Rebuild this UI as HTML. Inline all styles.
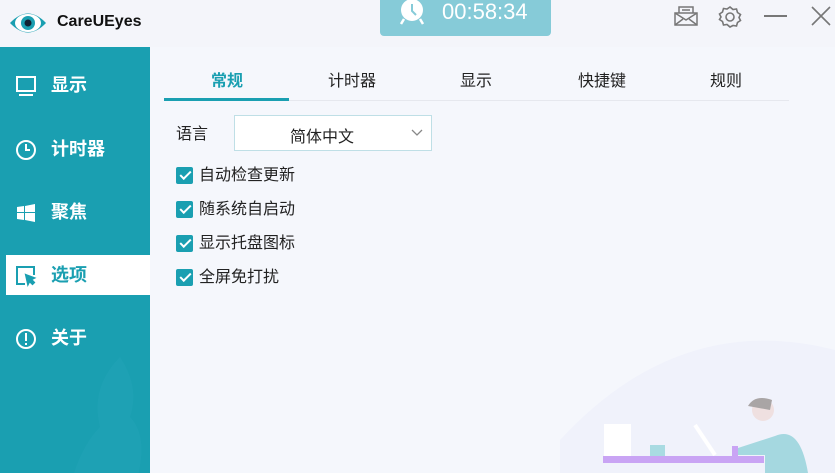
<!DOCTYPE html>
<html><head><meta charset="utf-8"><style>
*{margin:0;padding:0;box-sizing:border-box}
body{width:835px;height:473px;overflow:hidden;background:#f5f7fc;font-family:"Liberation Sans","Noto Sans CJK SC",sans-serif;position:relative}
.top{position:absolute;left:0;top:0;width:835px;height:47px;background:#f4f5fa}
.side{position:absolute;left:0;top:47px;width:150px;height:426px;background:#1a9fb1;overflow:hidden}
.item{position:absolute;left:6px;width:144px;height:40px;color:#fff;font-size:18px;font-weight:bold;line-height:40px;padding-left:45px}
.item svg{position:absolute;left:9px;top:10px}
.act{background:#fff;color:#1a9fb1}
.tab{position:absolute;top:67px;font-size:16px;color:#222}
.cb{position:absolute;left:176px;font-size:16px;color:#222;padding-left:23px;line-height:18px}
.cb:before{content:"";position:absolute;left:0;top:0;width:17px;height:17px;background:#1a9fb1;border-radius:2px}
.cb:after{content:"";position:absolute;left:4px;top:4px;width:9px;height:4px;border-left:2px solid #fff;border-bottom:2px solid #fff;transform:rotate(-45deg)}
</style></head><body>
<div class="top"></div>
<svg style="position:absolute;left:8px;top:8px" width="40" height="30" viewBox="0 0 40 30"><path d="M2 15 Q20 -4 38 15 Q20 34 2 15Z" fill="#1a9fb1"/><ellipse cx="20" cy="15" rx="13" ry="9" fill="#fff"/><circle cx="20" cy="15" r="7" fill="#1a9fb1"/><circle cx="20" cy="15" r="3.5" fill="#123"/></svg>
<div style="position:absolute;left:57px;top:13px;font-size:16px;font-weight:bold;color:#111">CareUEyes</div>
<div style="position:absolute;left:380px;top:0;width:171px;height:36px;background:#86cbd8;border-radius:0 0 4px 4px"></div>
<svg style="position:absolute;left:397px;top:0" width="30" height="26" viewBox="0 0 30 26"><circle cx="15" cy="10" r="11" fill="#fff"/><path d="M15 4v7l4 4" stroke="#86cbd8" stroke-width="2" fill="none"/><path d="M7 19l-3 5M23 19l3 5" stroke="#fff" stroke-width="2.5"/></svg>
<div style="position:absolute;left:442px;top:0;font-size:22px;color:#fff;line-height:24px">00:58:34</div>
<svg style="position:absolute;left:673px;top:5px" width="26" height="22" viewBox="0 0 26 22" fill="none" stroke="#777" stroke-width="1.5"><rect x="2" y="8" width="22" height="12"/><path d="M2 8l11 7 11-7M2 20l8-6M24 20l-8-6M6 8V2h14v6M9 5h8"/></svg>
<svg style="position:absolute;left:718px;top:5px" width="24" height="24" viewBox="0 0 24 24" fill="none" stroke="#777" stroke-width="1.6"><path d="M12 2l3 2.5 3.5-.5 1 3.5 3 2-1.5 3 1.5 3-3 2-1 3.5-3.5-.5L12 22l-3-2.5-3.5.5-1-3.5-3-2L3 12 1.5 9l3-2 1-3.5L9 4z"/><circle cx="12" cy="12" r="4"/></svg>
<div style="position:absolute;left:764px;top:15px;width:23px;height:1.5px;background:#777"></div>
<svg style="position:absolute;left:811px;top:6px" width="20" height="20" viewBox="0 0 20 20" stroke="#777" stroke-width="1.6"><path d="M1 1l18 18M19 1L1 19"/></svg>
<div class="side">
<svg style="position:absolute;left:-30px;top:280px" width="200" height="160" viewBox="0 0 200 160"><path d="M150 30 Q170 60 160 90 Q180 110 165 160 L100 160 Q110 120 130 100 Q120 60 150 30Z" fill="#22a4b5" opacity=".6"/></svg>
<div class="item" style="top:18px"><svg width="22" height="22" viewBox="0 0 22 22" fill="none" stroke="#fff" stroke-width="2"><rect x="2" y="2" width="18" height="14"/><path d="M4 20h14"/></svg>显示</div>
<div class="item" style="top:82px"><svg width="22" height="22" viewBox="0 0 22 22" fill="none" stroke="#fff" stroke-width="2"><circle cx="11" cy="11" r="9"/><path d="M11 5v6h4"/></svg>计时器</div>
<div class="item" style="top:145px"><svg width="22" height="22" viewBox="0 0 22 22" fill="#fff"><path d="M2 5l7-1v6H2zM10 4l10-2v8H10zM2 11h7v7l-7-1zM10 11h10v9l-10-2z"/></svg>聚焦</div>
<div class="item act" style="top:208px"><svg width="22" height="22" viewBox="0 0 22 22" fill="none" stroke="#1a9fb1" stroke-width="2"><path d="M10 19H2V2h17v8"/><path d="M11 10l8 3-3 1.5 3 3-1.5 1.5-3-3L13 19z" fill="#1a9fb1"/></svg>选项</div>
<div class="item" style="top:271px"><svg width="22" height="22" viewBox="0 0 22 22" fill="none" stroke="#fff" stroke-width="2"><circle cx="11" cy="11" r="9"/><path d="M11 5v8M11 15v2"/></svg>关于</div>
</div>
<div class="tab" style="left:211px;color:#1a9fb1;font-weight:bold">常规</div>
<div class="tab" style="left:328px">计时器</div>
<div class="tab" style="left:460px">显示</div>
<div class="tab" style="left:578px">快捷键</div>
<div class="tab" style="left:710px">规则</div>
<div style="position:absolute;left:164px;top:100px;width:625px;height:1px;background:#e6e8ee"></div>
<div style="position:absolute;left:164px;top:98px;width:125px;height:3px;background:#1a9fb1"></div>
<div style="position:absolute;left:176px;top:120px;font-size:16px;color:#222">语言</div>
<div style="position:absolute;left:234px;top:115px;width:198px;height:36px;background:#fff;border:1px solid #bfdfe6"></div>
<div style="position:absolute;left:290px;top:123px;font-size:16px;color:#222">简体中文</div>
<svg style="position:absolute;left:410px;top:128px" width="14" height="10" viewBox="0 0 14 10" fill="none" stroke="#888" stroke-width="1.3"><path d="M2 2l5 5 5-5"/></svg>
<div class="cb" style="top:167px">自动检查更新</div>
<div class="cb" style="top:201px">随系统自启动</div>
<div class="cb" style="top:235px">显示托盘图标</div>
<div class="cb" style="top:269px">全屏免打扰</div>
<svg style="position:absolute;left:560px;top:330px" width="275" height="143" viewBox="0 0 275 143"><path d="M0 110 Q120 -20 275 20 V143 H0Z" fill="#f0f2fb"/><rect x="44" y="94" width="27" height="32" fill="#fff"/><rect x="90" y="115" width="15" height="11" fill="#a9dbe2"/><path d="M135 95l20 30" stroke="#fff" stroke-width="4"/><rect x="43" y="126" width="161" height="7" fill="#c9a4f4"/><rect x="172" y="116" width="6" height="10" fill="#c9a4f4"/><circle cx="203" cy="80" r="11" fill="#efe0e0"/><path d="M188 76 Q195 64 212 70 L210 80Z" fill="#a9a5a5"/><path d="M178 118 L215 106 Q240 95 248 143 L205 143 L205 125 L178 125Z" fill="#a5d8e0"/></svg>
</body></html>
